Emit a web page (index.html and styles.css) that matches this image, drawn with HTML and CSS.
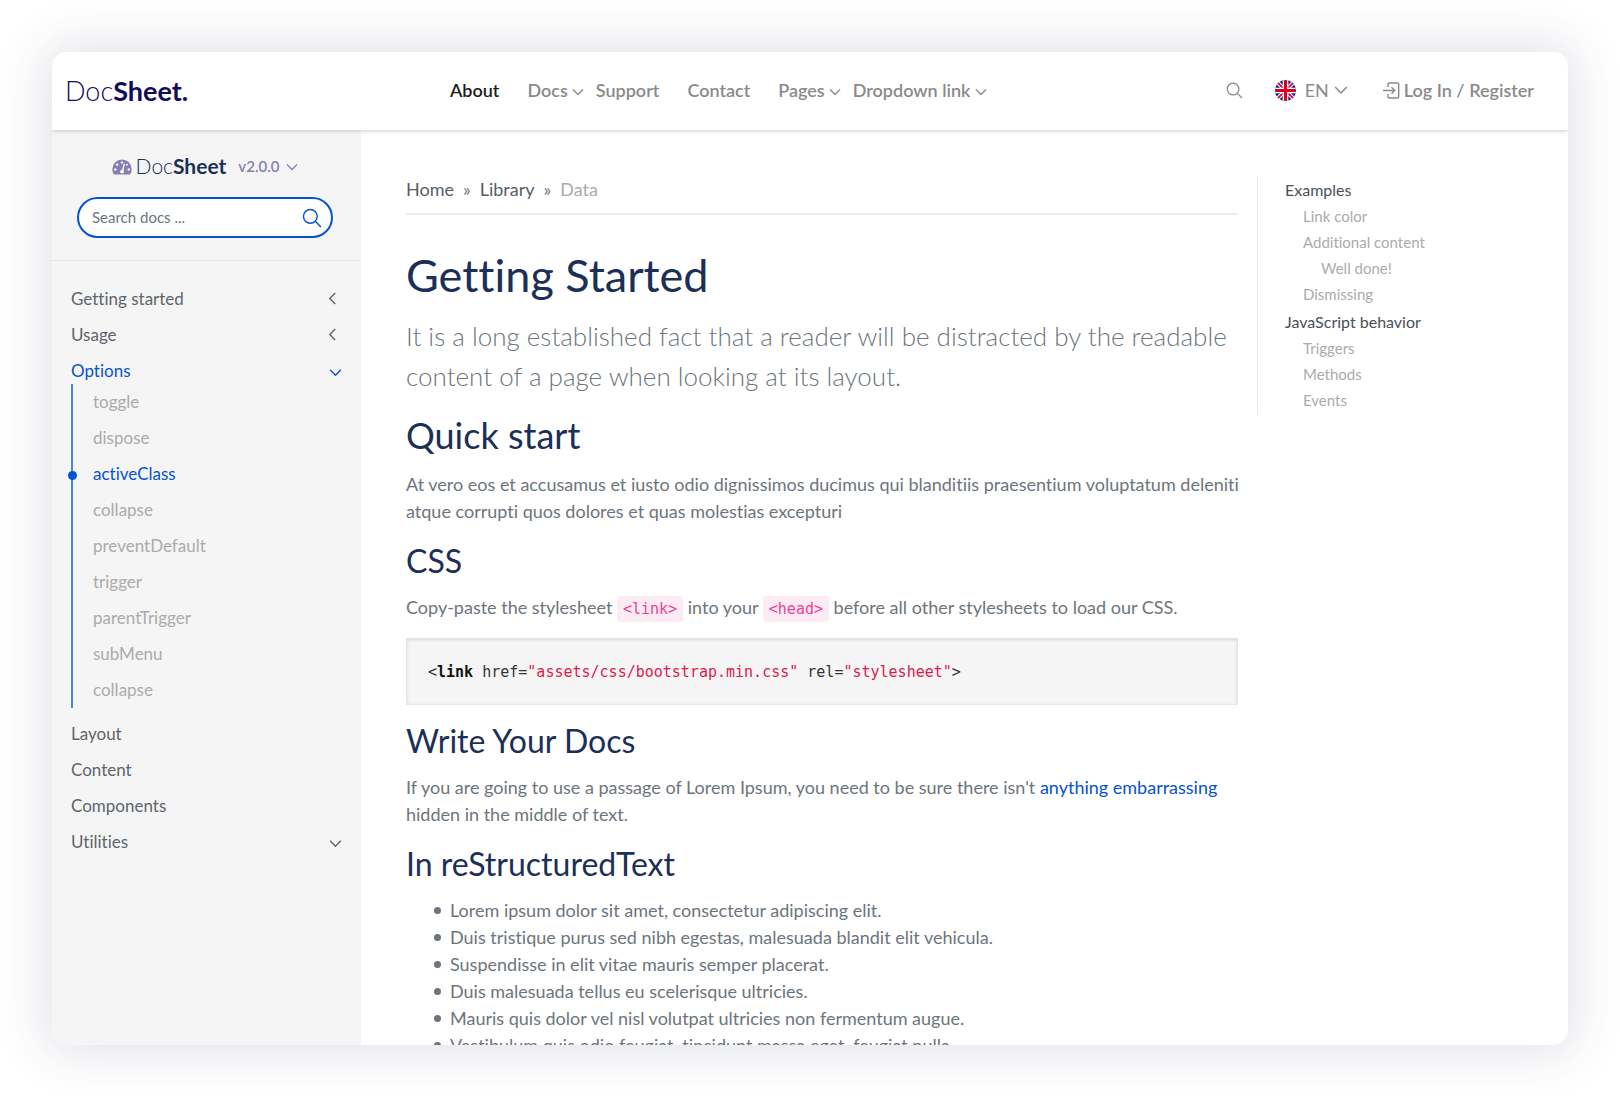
FILE: index.html
```html
<!DOCTYPE html>
<html lang="en">
<head>
<meta charset="utf-8">
<title>DocSheet – Getting Started</title>
<meta name="viewport" content="width=device-width, initial-scale=1">
<link rel="stylesheet" href="styles.css">
</head>
<body>
<svg class="sprite" aria-hidden="true">
  <symbol id="chevron" viewBox="0 0 12 12"><path d="M1 3.500l5 5 5-5" fill="none" stroke="currentColor" stroke-width="1.300"/></symbol>
  <symbol id="search" viewBox="0 0 18 18"><circle cx="7.500" cy="7.500" r="6.200" fill="none" stroke="currentColor" stroke-width="1.300"/><path d="M12 12l5 5" fill="none" stroke="currentColor" stroke-width="1.300"/></symbol>
</svg>
<div class="window">
  <header class="topbar">
    <a class="logo" href="#"><span>Doc</span><b>Sheet.</b></a>
    <nav class="nav" aria-label="Main">
      <a class="nav-link active" href="#">About</a>
      <a class="nav-link has-menu" href="#">Docs <svg class="caret"><use href="#chevron"/></svg></a>
      <a class="nav-link" href="#">Support</a>
      <a class="nav-link" href="#">Contact</a>
      <a class="nav-link has-menu" href="#">Pages <svg class="caret"><use href="#chevron"/></svg></a>
      <a class="nav-link has-menu" href="#">Dropdown link <svg class="caret"><use href="#chevron"/></svg></a>
    </nav>
    <div class="actions">
      <button class="icon-button" type="button" aria-label="Search"><svg class="icon-search"><use href="#search"/></svg></button>
      <button class="language" type="button">
        <svg class="flag" viewBox="0 0 60 60" aria-hidden="true">
          <clipPath id="round"><circle cx="30" cy="30" r="30"/></clipPath>
          <g clip-path="url(#round)">
            <path fill="#1b2a80" d="M0 0h60v60H0z"/>
            <path stroke="#fff" stroke-width="11" d="M4 4l52 52M56 4L4 56"/>
            <path stroke="#d80027" stroke-width="5" d="M4 4l52 52M56 4L4 56"/>
            <path stroke="#fff" stroke-width="16" d="M30 0v60M0 30h60"/>
            <path stroke="#d80027" stroke-width="9" d="M30 0v60M0 30h60"/>
          </g>
        </svg>
        <span>EN</span>
        <svg class="caret-lg"><use href="#chevron"/></svg>
      </button>
      <a class="login" href="#">
        <svg class="icon-login" viewBox="0 0 17 17" fill="none" stroke="currentColor" stroke-width="1.400"><path d="M5 5V2.200Q5 1 6.200 1H14.500Q15.700 1 15.700 2.200V14.800Q15.700 16 14.500 16H6.200Q5 16 5 14.800V12M0 8.500H11.500M8.500 5.200L11.800 8.500L8.500 11.800"/></svg>
        Log In / Register
      </a>
    </div>
  </header>
  <div class="layout">
    <aside class="sidebar">
      <div class="sidebar-head">
        <div class="product">
          <svg class="gauge" viewBox="0 0 20 16" aria-hidden="true">
            <path fill="currentColor" d="M10 0.500A9.700 9.700 0 0 0 0.300 10.200q0 2.800 1.300 4.800.4.500 1 .500H17.400q.6 0 1-.5 1.300-2 1.300-4.800A9.700 9.700 0 0 0 10 .5z"/>
            <g fill="#f5f5f5"><circle cx="3.300" cy="10.500" r="1.200"/><circle cx="5.200" cy="5.700" r="1.200"/><circle cx="10" cy="3.500" r="1.200"/><circle cx="14.900" cy="5.700" r="1"/><circle cx="16.700" cy="10.500" r="1.200"/><path d="M11.700 4.500l1.300.4-1.500 6q.9.900.5 2.300-.3.900-.7 1.100H8.600q-.9-1-.4-2.300.5-1.200 1.900-1.400z"/></g>
          </svg>
          <span class="product-name"><span>Doc</span><b>Sheet</b></span>
          <button class="version" type="button">v2.0.0 <svg class="caret"><use href="#chevron"/></svg></button>
        </div>
        <form class="search">
          <input type="search" placeholder="Search docs ..." aria-label="Search docs">
          <button type="submit" aria-label="Search"><svg class="icon-search"><use href="#search"/></svg></button>
        </form>
      </div>
      <nav aria-label="Documentation">
        <ul class="menu">
          <li><a class="menu-link" href="#">Getting started <svg class="arrow left"><use href="#chevron"/></svg></a></li>
          <li><a class="menu-link" href="#">Usage <svg class="arrow left"><use href="#chevron"/></svg></a></li>
          <li>
            <a class="menu-link open" href="#">Options <svg class="arrow down"><use href="#chevron"/></svg></a>
            <ul class="submenu">
              <li><a href="#">toggle</a></li>
              <li><a href="#">dispose</a></li>
              <li><a class="current" href="#">activeClass</a></li>
              <li><a href="#">collapse</a></li>
              <li><a href="#">preventDefault</a></li>
              <li><a href="#">trigger</a></li>
              <li><a href="#">parentTrigger</a></li>
              <li><a href="#">subMenu</a></li>
              <li><a href="#">collapse</a></li>
            </ul>
          </li>
          <li><a class="menu-link" href="#">Layout</a></li>
          <li><a class="menu-link" href="#">Content</a></li>
          <li><a class="menu-link" href="#">Components</a></li>
          <li><a class="menu-link" href="#">Utilities <svg class="arrow down"><use href="#chevron"/></svg></a></li>
        </ul>
      </nav>
    </aside>
    <main class="content">
      <article class="article">
        <ol class="breadcrumb">
          <li><a href="#">Home</a></li>
          <li><a href="#">Library</a></li>
          <li aria-current="page">Data</li>
        </ol>
        <h1>Getting Started</h1>
        <p class="lead">It is a long established fact that a reader will be distracted by the readable content of a page when looking at its layout.</p>
        <h2>Quick start</h2>
        <p>At vero eos et accusamus et iusto odio dignissimos ducimus qui blanditiis praesentium voluptatum deleniti atque corrupti quos dolores et quas molestias excepturi</p>
        <h3>CSS</h3>
        <p>Copy-paste the stylesheet <code class="tag">&lt;link&gt;</code> into your <code class="tag">&lt;head&gt;</code> before all other stylesheets to load our CSS.</p>
        <pre class="snippet"><code>&lt;<b>link</b> href=<i>"assets/css/bootstrap.min.css"</i> rel=<i>"stylesheet"</i>&gt;</code></pre>
        <h3>Write Your Docs</h3>
        <p>If you are going to use a passage of Lorem Ipsum, you need to be sure there isn't <a href="#">anything embarrassing</a> hidden in the middle of text.</p>
        <h3>In reStructuredText</h3>
        <ul class="bullets">
          <li>Lorem ipsum dolor sit amet, consectetur adipiscing elit.</li>
          <li>Duis tristique purus sed nibh egestas, malesuada blandit elit vehicula.</li>
          <li>Suspendisse in elit vitae mauris semper placerat.</li>
          <li>Duis malesuada tellus eu scelerisque ultricies.</li>
          <li>Mauris quis dolor vel nisl volutpat ultricies non fermentum augue.</li>
          <li>Vestibulum quis odio feugiat, tincidunt massa eget, feugiat nulla.</li>
        </ul>
      </article>
      <nav class="toc" aria-label="On this page">
        <ul>
          <li><a class="toc-title" href="#">Examples</a>
            <ul>
              <li><a href="#">Link color</a></li>
              <li><a href="#">Additional content</a>
                <ul><li><a href="#">Well done!</a></li></ul>
              </li>
              <li><a href="#">Dismissing</a></li>
            </ul>
          </li>
          <li><a class="toc-title" href="#">JavaScript behavior</a>
            <ul>
              <li><a href="#">Triggers</a></li>
              <li><a href="#">Methods</a></li>
              <li><a href="#">Events</a></li>
            </ul>
          </li>
        </ul>
      </nav>
    </main>
  </div>
</div>
</body>
</html>
```
FILE: styles.css
```css
*, *::before, *::after { box-sizing: border-box; }

:root {
  --blue: #0552d3;
  --navy: #1b2f57;
  --text: #6c757d;
  --muted: #ababab;
  --panel: #f5f5f5;
  --line: #e9ebef;
}

body {
  margin: 0;
  height: 100vh;
  padding: 52px 52px 51px;
  background: #fff;
  color: var(--text);
  font: 17px/27px Lato, "Open Sans", sans-serif;
  font-variant-ligatures: none;
}

a { color: inherit; text-decoration: none; }
ul, ol { list-style: none; margin: 0; padding: 0; }
button { border: 0; padding: 0; background: none; color: inherit; font: inherit; cursor: pointer; }
svg { display: block; flex: none; }
.sprite { position: absolute; width: 0; height: 0; }

.window {
  display: flex;
  flex-direction: column;
  height: 100%;
  overflow: hidden;
  background: #fff;
  border-radius: 15px;
  box-shadow: 0 0 50px 6px rgba(50, 55, 100, .15);
}

/* Top bar */
.topbar {
  position: relative;
  z-index: 1;
  flex: none;
  display: flex;
  align-items: center;
  height: 78px;
  padding: 0 34px 2px 13px;
  background: #fff;
  box-shadow: 0 1px 4px rgba(0, 0, 0, .2);
  color: #8a8a8a;
  font-size: 18px;
  font-weight: 600;
}

.logo { width: 385px; color: #120a5c; font-size: 27px; font-weight: 300; }
.logo b { font-weight: 700; }

.nav { display: flex; gap: 28px; }
.nav-link { display: flex; align-items: center; gap: 4px; }
.nav-link.active { color: #1c1c1c; }
.nav-link.has-menu { margin-right: -16px; }
.caret { width: 12px; height: 12px; margin-top: 4px; }

.actions { display: flex; align-items: center; margin-left: auto; }
.icon-button { margin-right: 32px; }
.icon-button .icon-search { width: 17px; height: 17px; }
.language { display: flex; align-items: center; margin-right: 35px; font-weight: 400; }
.flag { width: 21px; height: 21px; margin-right: 9px; }
.caret-lg { width: 14px; height: 14px; margin-left: 5px; }
.login { display: flex; align-items: center; gap: 4px; }
.icon-login { width: 17px; height: 17px; }

/* Sidebar */
.layout { display: flex; flex: 1; min-height: 0; }
.sidebar { flex: none; width: 309px; background: var(--panel); }
.sidebar-head { padding: 21px 28px 22px 25px; border-bottom: 1px solid #e2e6ea; }
.product { display: flex; align-items: center; justify-content: center; height: 28px; margin-bottom: 18px; color: #8580b0; }
.gauge { width: 20px; height: 16px; margin: 4px 4px 0 0; }
.product-name { color: var(--navy); font-size: 21px; font-weight: 300; }
.product-name b { font-weight: 700; }
.version { display: flex; align-items: center; gap: 7px; margin: 3px 0 0 12px; font-size: 15px; font-weight: 600; }
.version .caret { margin-top: 0; }

.search { display: flex; align-items: center; height: 41px; padding: 0 9px 0 13px; background: #fff; border: 2px solid var(--blue); border-radius: 21px; }
.search input { flex: 1; min-width: 0; padding: 0; border: 0; outline: 0; background: none; font: inherit; font-size: 15px; color: var(--text); }
.search input::placeholder { color: var(--text); opacity: 1; }
.search button { color: var(--blue); }
.search .icon-search { width: 20px; height: 20px; }

.menu { display: flex; flex-direction: column; gap: 10px; padding: 24px 19px; }
.menu-link { display: flex; align-items: center; justify-content: space-between; height: 26px; color: #5d656c; }
.menu-link.open { color: var(--blue); }
.arrow { width: 13px; height: 13px; }
.arrow.left { margin-right: 3px; transform: rotate(90deg); }
.arrow.down { margin-top: 4px; }
.submenu { margin: 1px 0 2px; padding-left: 20px; border-left: 2px solid #4c85da; }
.submenu a { position: relative; display: block; line-height: 36px; color: var(--muted); }
.submenu .current { color: var(--blue); }
.submenu .current::before {
  content: "";
  position: absolute;
  top: 15px;
  left: -25px;
  width: 9px;
  height: 9px;
  border-radius: 50%;
  background: var(--blue);
}

/* Article */
.content { display: flex; flex: 1; min-width: 0; gap: 19px; padding: 46px 0 0 45px; }
.article { flex: 1; min-width: 0; font-size: 18px; }
.breadcrumb { display: flex; gap: 9px; padding-bottom: 10px; margin-bottom: 33px; border-bottom: 2px solid var(--line); color: var(--muted); }
.breadcrumb a { color: #565e66; }
.breadcrumb li:not(:last-child)::after { content: "»"; margin-left: 9px; color: var(--text); }

h1, h2, h3 { margin: 0 0 14px; color: var(--navy); font-weight: 400; }
h1 { font-size: 45px; line-height: 54px; }
h2 { font-size: 36px; line-height: 44px; }
h3 { font-size: 32px; line-height: 38px; }
p { margin: 0 -15px 17px 0; }
p a { color: var(--blue); }
.lead { font-size: 26px; line-height: 40px; font-weight: 300; }

code { font-family: "DejaVu Sans Mono", "Liberation Mono", monospace; font-size: 15px; }
.tag { padding: 4px 6px; border-radius: 4px; background: #fdebf3; color: #ef3f98; line-height: 20px; }
.snippet {
  margin: 0 0 17px;
  padding: 20px 21px;
  overflow: hidden;
  border: 1px solid #e6e6e6;
  background: var(--panel);
  box-shadow: inset 0 1px 3px rgba(0, 0, 0, .12);
  color: #333;
  line-height: 24px;
}
.snippet b { color: #111; }
.snippet i { color: #dd1a50; font-style: normal; }
.bullets { padding-left: 28px; }
.bullets li { display: flex; align-items: center; gap: 9px; }
.bullets li::before { content: ""; flex: none; width: 7px; height: 7px; border-radius: 50%; background: currentColor; }

/* Table of contents */
.toc { flex: none; align-self: flex-start; width: 311px; padding: 0 0 1px 27px; border-left: 1px solid var(--line); font-size: 15px; line-height: 26px; color: var(--muted); }
.toc ul ul { padding-left: 18px; }
.toc > ul > li { padding-bottom: 1px; }
.toc-title { display: block; color: #495057; font-size: 16px; line-height: 27px; }
```
